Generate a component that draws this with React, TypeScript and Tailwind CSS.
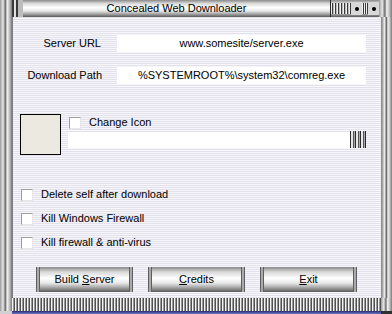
import React from "react";

const chromeH =
  "bg-[linear-gradient(to_bottom,#8a8a8a_0%,#d8d8d8_20%,#ffffff_45%,#e6e6e6_65%,#9a9a9a_85%,#5a5a5a_100%)]";
const chromeV =
  "bg-[linear-gradient(to_right,#9a9a9a_0%,#e8e8e8_25%,#6e6e6e_45%,#f4f4f4_60%,#bdbdbd_80%,#7a7a7a_100%)]";
const stripes =
  "bg-[repeating-linear-gradient(to_bottom,#e2e1ec_0px,#e2e1ec_1px,#f7f7fb_1px,#f7f7fb_2px)]";

function Box({ className = "" }: { className?: string }) {
  return (
    <span
      className={`inline-block w-[12px] h-[12px] bg-white border border-t-[#9c9c9c] border-l-[#9c9c9c] border-r-[#e6e6e6] border-b-[#e6e6e6] ${className}`}
    />
  );
}

function Check({ label }: { label: string }) {
  return (
    <div className="flex items-center h-[13px]">
      <Box />
      <span className="ml-[8px] text-[11px] leading-none text-black">{label}</span>
    </div>
  );
}

function Button({ children }: { children: React.ReactNode }) {
  return (
    <div className={`flex h-[25px] w-[97px] ${chromeH}`}>
      <div className="w-[4px] bg-[linear-gradient(to_right,#3a3a3a,#cfcfcf_50%,#3a3a3a)]" />
      <div className="flex-1 flex items-center justify-center text-[11px] text-black">
        <span>{children}</span>
      </div>
      <div className="w-[4px] bg-[linear-gradient(to_right,#3a3a3a,#cfcfcf_50%,#3a3a3a)]" />
    </div>
  );
}

export default function App() {
  return (
    <div className="w-[392px] h-[314px] flex flex-col bg-white font-['Liberation_Sans',Arial,sans-serif] overflow-hidden">
      {/* title bar */}
      <div className={`h-[17px] flex items-stretch ${chromeH}`}>
        <div className="w-[23px] flex">
          <div className={`w-[12px] ${chromeV}`} />
          <div className="w-[2px] bg-[#3a3a3a]" />
          <div className="w-[2px] bg-[#e0e0e0]" />
          <div className="w-[2px] bg-[#3a3a3a]" />
          <div className="w-[5px] bg-[#bdbdbd]" />
        </div>
        <div className="flex-1 flex items-center justify-center text-[11px] text-black">
          Concealed Web Downloader
        </div>
        <div className="w-[62px] flex items-center">
          <div className="w-[1px] h-full bg-[#2a2a2a]" />
          <div className="w-[20px] h-[11px] bg-[repeating-linear-gradient(to_right,#f0f0f0_0px,#f0f0f0_1px,#3a3a3a_1px,#3a3a3a_2px,#bbbbbb_2px,#bbbbbb_3px)]" />
          <div className="w-[11px] h-[13px] flex items-center justify-center bg-[#d8d8d8]">
            <span className="w-[4px] h-[4px] rounded-full bg-black" />
          </div>
          <div className="w-[6px] h-[11px] bg-[repeating-linear-gradient(to_right,#f0f0f0_0px,#f0f0f0_1px,#3a3a3a_1px,#3a3a3a_2px)]" />
          <div className="w-[11px] h-[13px] flex items-center justify-center bg-[#d8d8d8]">
            <span className="w-[4px] h-[4px] rounded-full bg-black" />
          </div>
          <div className={`w-[13px] h-full ${chromeV}`} />
        </div>
      </div>

      {/* body */}
      <div className="flex flex-1">
        <div className={`w-[12px] ${chromeV}`} />
        <div className={`flex-1 flex flex-col ${stripes} border-l border-[#7a7a7a]`}>
          <div className="h-[18px]" />
          <div className="flex items-center h-[17px]">
            <div className="w-[88px] text-right text-[11px] text-black">Server URL</div>
            <div className="ml-[16px] w-[249px] h-[17px] bg-white flex items-center justify-center text-[11px] text-black">
              www.somesite/server.exe
            </div>
          </div>
          <div className="h-[15px]" />
          <div className="flex items-center h-[17px]">
            <div className="w-[89px] text-right text-[11px] text-black">Download Path</div>
            <div className="ml-[15px] w-[249px] h-[17px] bg-white flex items-center justify-center text-[11px] text-black">
              %SYSTEMROOT%\system32\comreg.exe
            </div>
          </div>
          <div className="h-[30px]" />
          <div className="flex h-[41px]">
            <div className="ml-[7px] w-[41px] h-[41px] bg-[#ece9e0] border border-black" />
            <div className="ml-[7px] flex flex-col w-[298px]">
              <div className="flex items-center h-[13px] mt-[2px]">
                <Box className="ml-[1px]" />
                <span className="ml-[8px] text-[11px] leading-none text-black">Change Icon</span>
              </div>
              <div className="flex items-center mt-[2px] h-[17px]">
                <div className="w-[282px] h-[16px] bg-white" />
                <div className="w-[16px] h-[17px] bg-[repeating-linear-gradient(to_right,#2a2a2a_0px,#2a2a2a_1px,#e8e8e8_1px,#e8e8e8_3px,#555_3px,#555_4px,#aaa_4px,#aaa_5px)]" />
              </div>
            </div>
          </div>
          <div className="h-[33px]" />
          <div className="ml-[8px] flex flex-col gap-[11px]">
            <Check label="Delete self after download" />
            <Check label="Kill Windows Firewall" />
            <Check label="Kill firewall & anti-virus" />
          </div>
          <div className="h-[18px]" />
          <div className="ml-[23px] flex gap-[15px]">
            <Button>
              Build <span className="underline">S</span>erver
            </Button>
            <Button>
              <span className="underline">C</span>redits
            </Button>
            <Button>
              <span className="underline">E</span>xit
            </Button>
          </div>
        </div>
        <div className={`w-[11px] ${chromeV} border-l border-[#8a8a8a]`} />
      </div>

      {/* bottom */}
      <div className="flex h-[13px]">
        <div className={`w-[12px] ${chromeV}`} />
        <div className="flex-1 bg-[repeating-linear-gradient(to_right,#f4f4f4_0px,#f4f4f4_1px,#9a9a9a_1px,#9a9a9a_2px,#505050_2px,#505050_3px)]" />
        <div className={`w-[11px] ${chromeV}`} />
      </div>
      <div className="flex h-[3px]">
        <div className="w-[12px] bg-[#d0d0d0]" />
        <div className="flex-1 bg-[linear-gradient(to_bottom,#2a2a6a,#6a78c8)]" />
        <div className="w-[11px] bg-[#303030]" />
      </div>
    </div>
  );
}
